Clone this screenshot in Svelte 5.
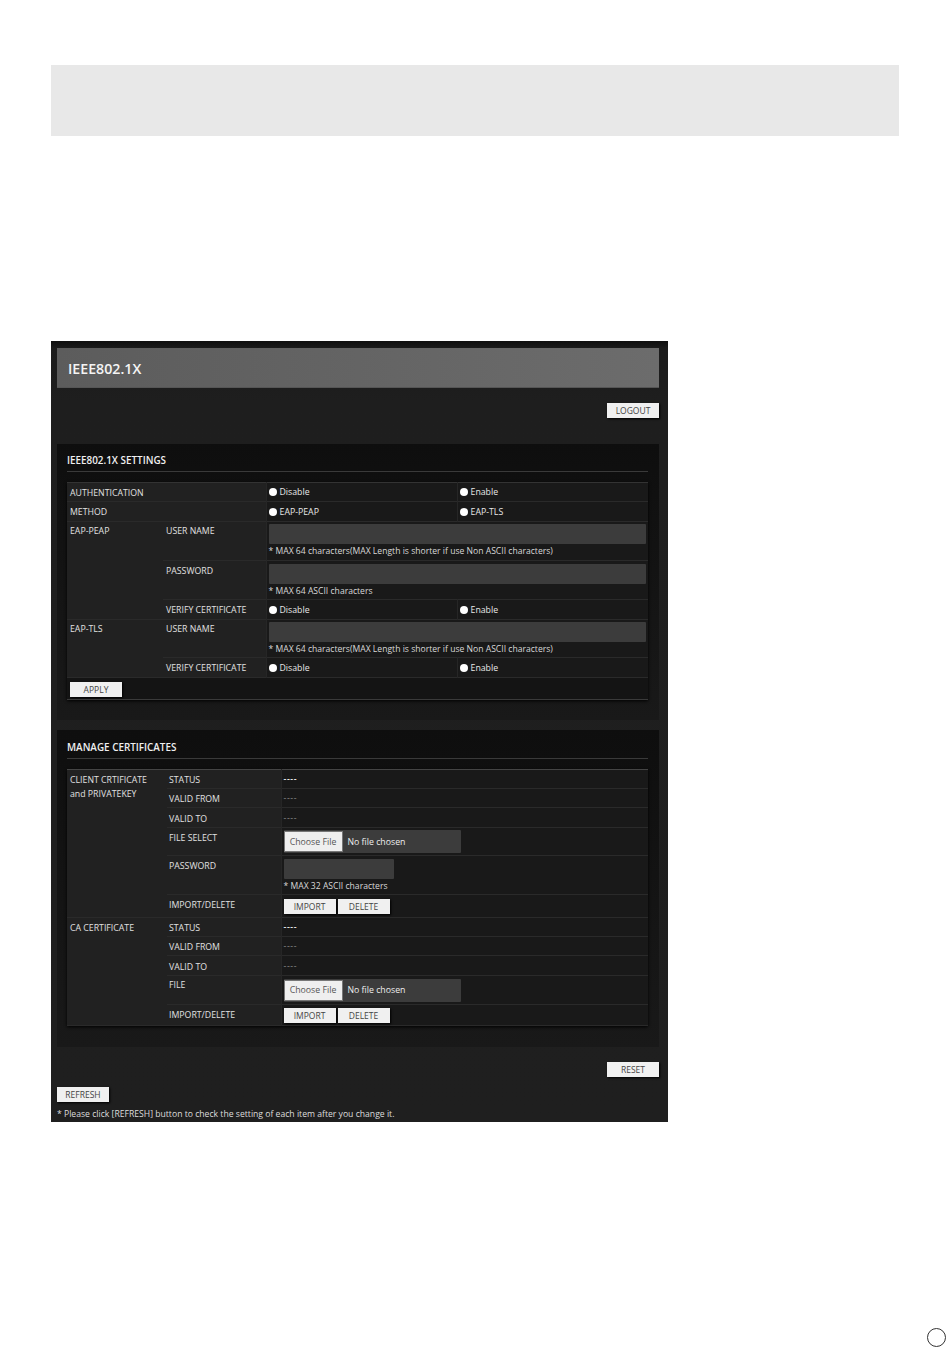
<script>
  const MAXU = '* MAX 64 characters(MAX Length is shorter if use Non ASCII characters)';
  const certs = [
    { name: ['CLIENT CRTIFICATE', 'and PRIVATEKEY'], file: 'FILE SELECT', password: true, span: 6, fileRow: 'r28', actionRow: 'r23' },
    { name: ['CA CERTIFICATE'], file: 'FILE', password: false, span: 5, fileRow: 'r29 lift', actionRow: 'r21' }
  ];
</script>

{#snippet radios(a, b)}
  <td class="val"><label class="radio"><span class="dot"></span>{a}</label></td>
  <td class="val"><label class="radio"><span class="dot"></span>{b}</label></td>
{/snippet}

{#snippet textField(note, tight)}
  <td class="val field" class:tight colspan="2">
    <input class="text wide" type="text" />
    <div class="note">{note}</div>
  </td>
{/snippet}

<div class="page">
  <div class="banner"></div>

  <main class="panel">
    <h1 class="title">IEEE802.1X</h1>
    <div class="right top-action"><button class="btn">LOGOUT</button></div>

    <section class="card first">
      <h2>IEEE802.1X SETTINGS</h2>
      <table class="settings">
        <colgroup><col class="c1" /><col class="c2" /><col class="c3" /><col class="c3" /></colgroup>
        <tbody>
          <tr class="r19"><th colspan="2">AUTHENTICATION</th>{@render radios('Disable', 'Enable')}</tr>
          <tr class="r20"><th colspan="2">METHOD</th>{@render radios('EAP-PEAP', 'EAP-TLS')}</tr>
          <tr class="r39 lift"><th rowspan="3">EAP-PEAP</th><th>USER NAME</th>{@render textField(MAXU, true)}</tr>
          <tr class="r39"><th>PASSWORD</th>{@render textField('* MAX 64 ASCII characters', false)}</tr>
          <tr class="r20"><th>VERIFY CERTIFICATE</th>{@render radios('Disable', 'Enable')}</tr>
          <tr class="r38 lift"><th rowspan="2">EAP-TLS</th><th>USER NAME</th>{@render textField(MAXU, true)}</tr>
          <tr class="r20"><th>VERIFY CERTIFICATE</th>{@render radios('Disable', 'Enable')}</tr>
          <tr class="apply"><td colspan="4"><button class="btn">APPLY</button></td></tr>
        </tbody>
      </table>
    </section>

    <section class="card second">
      <h2>MANAGE CERTIFICATES</h2>
      <table class="certs">
        <colgroup><col class="k1" /><col class="k2" /><col /></colgroup>
        <tbody>
          {#each certs as c}
            <tr class="r19 group">
              <th rowspan={c.span}>{#each c.name as n}<div class="nm">{n}</div>{/each}</th>
              <th class="k">STATUS</th><td class="val plain bright">----</td>
            </tr>
            <tr class="r19"><th class="k">VALID FROM</th><td class="val plain">----</td></tr>
            <tr class="r20 drop"><th class="k">VALID TO</th><td class="val plain">----</td></tr>
            <tr class={c.fileRow}>
              <th class="k">{c.file}</th>
              <td class="val file-cell">
                <div class="file"><button class="choose">Choose File</button><span>No file chosen</span></div>
              </td>
            </tr>
            {#if c.password}
              <tr class="r39">
                <th class="k">PASSWORD</th>
                <td class="val field"><input class="text short" type="password" /><div class="note">* MAX 32 ASCII characters</div></td>
              </tr>
            {/if}
            <tr class={c.actionRow}>
              <th class="k">IMPORT/DELETE</th>
              <td class="val"><div class="actions"><button class="btn">IMPORT</button><button class="btn">DELETE</button></div></td>
            </tr>
          {/each}
        </tbody>
      </table>
    </section>

    <div class="right bottom-action"><button class="btn">RESET</button></div>
    <div class="refresh"><button class="btn">REFRESH</button></div>
    <p class="foot">* Please click [REFRESH] button to check the setting of each item after you change it.</p>
  </main>

  <div class="pager"><span class="ring"></span></div>
</div>

<style>
  :global(body) { margin: 0; background: #fff; }
  .page { width: 950px; height: 1360px; box-sizing: border-box; padding-top: 65px; font-family: "Open Sans", "Liberation Sans", sans-serif; overflow: hidden; }
  .banner { margin: 0 51px; height: 71px; background: #e8e8e8; }

  .panel { width: 617px; height: 781px; margin: 205px 0 0 51px; padding: 7px 9px 0 6px; box-sizing: border-box; opacity: .999;
    background: linear-gradient(#0f0f0f 0, #1b1b1b 7px, #1e1e1e 60px, #1f1f1f 100%); color: #e6e6e6; }
  .title { margin: 0; height: 40px; box-sizing: border-box; padding-left: 11px; font-size: 14.2px; font-weight: 600; line-height: 41px; color: #f4f4f4;
    background: linear-gradient(90deg, #5c5c5c, #6c6c6c); border-bottom: 1px solid #555; }

  .right { display: flex; justify-content: flex-end; }
  .top-action { margin-top: 15px; }
  .bottom-action { margin-top: 15px; }
  .refresh { margin-top: 10px; }

  .btn { display: block; width: 52px; height: 15px; padding: 0; border: 0; background: #f0f0f0; color: #444; font: 400 8.5px/15px "Open Sans", "Liberation Sans", sans-serif; box-shadow: 1px 1px 2px #000; }

  .card { padding: 0 11px 0 10px; background: linear-gradient(#0e0e0e, #191919); }
  .first { height: 276px; margin-top: 26px; }
  .second { height: 317px; margin-top: 10px; }
  h2 { margin: 0 0 10px; height: 28px; box-sizing: border-box; border-bottom: 1px solid #3a3a3a; font-size: 9.9px; font-weight: 600; line-height: 33px; color: #f0f0f0; }
  .second h2 { height: 29px; line-height: 35px; }

  table { width: 581px; table-layout: fixed; border-collapse: collapse; font-size: 8.75px; border-top: 1px solid #333; border-bottom: 1px solid #3a3a3a; box-shadow: 0 1px 3px #000; }
  .c1 { width: 96px; } .c2 { width: 103px; } .c3 { width: 191px; }
  .k1 { width: 100px; } .k2 { width: 114px; }
  tr { border-bottom: 1px solid #2a2a2a; }
  th { padding: 3px 0 0 3px; text-align: left; vertical-align: top; font-weight: 400; color: #e2e2e2; background: #212121; line-height: 14px; }
  .lift th { padding-top: 2px; }
  .drop th { padding-top: 4px; }
  .drop td { padding-top: 2px; }
  th.k { padding-left: 2px; }
  .val { padding: 0 0 0 2px; background: #191919; color: #e8e8e8; vertical-align: middle; border-left: 1px solid #262626; }
  .r19 { height: 19px; } .r20 { height: 20px; } .r21 { height: 21px; } .r23 { height: 23px; } .r28 { height: 28px; } .r29 { height: 29px; } .r38 { height: 38px; } .r39 { height: 39px; }
  .group { border-top: 1px solid #444; }
  .nm { line-height: 14px; }

  .radio { display: flex; align-items: center; gap: 3px; font-size: 8.75px; }
  .dot { width: 8px; height: 8px; border-radius: 50%; background: #fff; }

  .field { vertical-align: top; padding-top: 3px; }
  .field.tight { padding-top: 2px; }
  .text { display: block; height: 20px; padding: 0; border: 0; box-sizing: border-box; background: #3c3c3c; border-radius: 1px; }
  .wide { width: 377px; }
  .short { width: 110px; }
  .note { margin-top: 1px; font-size: 8.6px; line-height: 12px; color: #d8d8d8; }

  .plain { color: #8e8e8e; line-height: 1; letter-spacing: .6px; }
  .bright { color: #f4f4f4; font-weight: 600; }

  .file { display: flex; align-items: center; width: 177px; height: 23px; background: #3c3c3c; border-radius: 1px; font-size: 8.75px; color: #eee; }
  .choose { width: 59px; height: 21px; margin-right: 5px; padding: 0; border: 1px solid #777; background: #efefef; color: #555; font: 400 8.75px "Open Sans", "Liberation Sans", sans-serif; }
  .actions { display: flex; gap: 2px; }
  .r21 .actions { padding-top: 1px; }

  .apply { height: 22px; border-bottom: 0; }
  .apply td { padding: 4px 0 0 3px; vertical-align: top; background: #141414; }

  .foot { margin: 5px 0 0; font-size: 8.63px; line-height: 14px; color: #ddd; }

  .pager { display: flex; justify-content: flex-end; margin: 206px 4px 0 0; }
  .ring { width: 17px; height: 17px; border: 1px solid #333; border-radius: 50%; box-sizing: content-box; }
</style>
